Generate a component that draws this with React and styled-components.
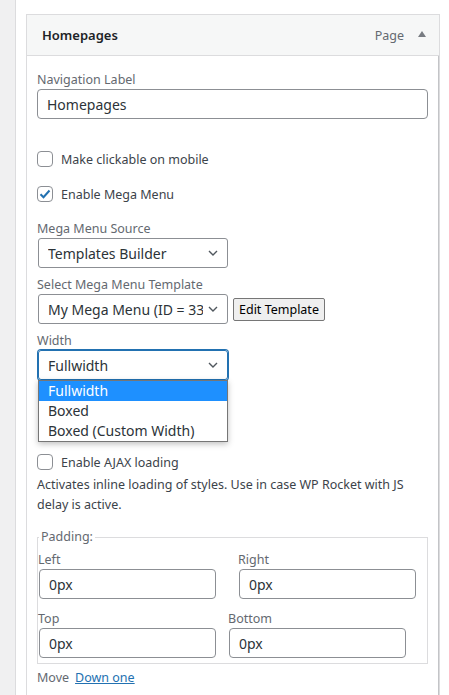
import React from "react";
import styled, { createGlobalStyle } from "styled-components";

const Global = createGlobalStyle`
  html, body { margin: 0; padding: 0; background: #fff; }
  body { font-family: "Noto Sans", "Open Sans", sans-serif; color: #3c434a; font-size: 13px; }
  * { box-sizing: border-box; }
`;

const Page = styled.div`
  display: flex;
  min-height: 695px;
`;

const Strip = styled.div`
  width: 16px;
  flex: none;
  background: #f0f0f1;
  border-right: 1px solid #dcdcde;
`;

const Main = styled.div`
  flex: 1;
  padding: 14px 9px 0 10px;
`;

const Card = styled.div`
  border: 1px solid #dcdcde;
  border-bottom: none;
`;

const Header = styled.div`
  height: 41px;
  background: #f6f7f7;
  border-bottom: 1px solid #dcdcde;
  display: flex;
  align-items: center;
  padding: 0 13px 0 15px;
`;

const Title = styled.div`
  flex: 1;
  font-weight: 600;
  font-size: 13px;
  color: #1d2327;
`;

const Type = styled.span`
  color: #646970;
  font-size: 12.5px;
  margin-right: 14px;
`;

const Toggle = styled.span`
  width: 0;
  height: 0;
  border-left: 4px solid transparent;
  border-right: 4px solid transparent;
  border-bottom: 6px solid #787c82;
  margin-bottom: 2px;
`;

const Body = styled.div`
  padding: 15px 10px 0 10px;
  border-right: 1px solid #c3c4c7;
  min-height: 640px;
`;

const Field = styled.div`
  position: relative;
  margin-top: ${(p) => p.$mt || 0}px;
`;

const Label = styled.div`
  line-height: 18px;
  font-size: 12.5px;
  color: #646970;
`;

const TextInput = styled.div`
  height: 30px;
  width: ${(p) => p.$w || "100%"};
  border: 1px solid #8c8f94;
  border-radius: 4px;
  padding: 0 9px;
  display: flex;
  align-items: center;
  font-size: 14px;
  color: #2c3338;
  margin-left: ${(p) => p.$ml || 0}px;
`;

const SelectRow = styled.div`
  display: flex;
  align-items: center;
  gap: 5px;
`;

const Select = styled.div`
  position: relative;
  width: 190px;
  flex: none;
  height: 30px;
  margin-left: 1px;
  border: 1px solid ${(p) => (p.$focus ? "#2271b1" : "#8c8f94")};
  box-shadow: ${(p) => (p.$focus ? "0 0 0 1px #2271b1" : "none")};
  border-radius: 3px;
  padding: 0 24px 0 9px;
  display: flex;
  align-items: center;
  font-size: 14px;
  color: #2c3338;
`;

const SelectText = styled.span`
  flex: 1;
  white-space: nowrap;
  overflow: hidden;
`;

const Chevron = styled.svg`
  position: absolute;
  right: 9px;
  top: 11px;
`;

const Button = styled.div`
  height: 23px;
  padding: 0 5px;
  border: 1px solid #767676;
  border-radius: 2px;
  background: #efefef;
  color: #000;
  font-size: 12.5px;
  display: flex;
  align-items: center;
`;

const Dropdown = styled.div`
  position: absolute;
  top: 48px;
  left: 1px;
  width: 190px;
  background: #fff;
  border: 1px solid #767676;
  box-shadow: 0 2px 6px rgba(0, 0, 0, 0.25);
  z-index: 2;
`;

const Option = styled.div`
  height: 20px;
  line-height: 20px;
  padding: 0 9px;
  font-size: 14px;
  background: ${(p) => (p.$active ? "#1e90ff" : "transparent")};
  color: ${(p) => (p.$active ? "#fff" : "#2c3338")};
`;

const CheckRow = styled.label`
  display: flex;
  align-items: center;
  gap: 8px;
  height: 20px;
  margin-top: ${(p) => p.$mt || 0}px;
  color: #3c434a;
  font-size: 12.5px;
`;

const Box = styled.span`
  width: 16px;
  height: 16px;
  border: 1px solid #8c8f94;
  border-radius: 4px;
  background: #fff;
  display: flex;
  align-items: center;
  justify-content: center;
`;

const Desc = styled.p`
  margin: 3px 0 0;
  line-height: 20px;
  font-size: 12.5px;
  color: #3c434a;
`;

const Fieldset = styled.fieldset`
  margin: 13px 0 0;
  padding: 0 1px 5px 0;
  border: 1px solid #dcdcde;
`;

const Legend = styled.legend`
  padding: 0 2px;
  margin-left: 1px;
  line-height: 18px;
  font-size: 12.5px;
  color: #646970;
`;

const PadRow = styled.div`
  display: flex;
  gap: ${(p) => p.$gap}px;
  margin-top: ${(p) => p.$mt || 0}px;
`;

const PadCell = styled.div`
  width: 177px;
`;

const Move = styled.div`
  margin-top: 4px;
  line-height: 20px;
  font-size: 12.5px;
  color: #646970;
  display: flex;
  gap: 6px;
`;

const Link = styled.a`
  color: #2271b1;
  text-decoration: underline;
`;

const ChevronIcon = () => (
  <Chevron width="10" height="6" viewBox="0 0 10 6">
    <path d="M1 1l4 4 4-4" fill="none" stroke="#50575e" strokeWidth="1.4" />
  </Chevron>
);

const Check = () => (
  <svg width="12" height="10" viewBox="0 0 12 10">
    <path d="M1.5 5.2l3 3L10.5 1.5" fill="none" stroke="#2271b1" strokeWidth="2" />
  </svg>
);

export default function App() {
  return (
    <>
      <Global />
      <Page>
        <Strip />
        <Main>
          <Card>
            <Header>
              <Title>Homepages</Title>
              <Type>Page</Type>
              <Toggle />
            </Header>
            <Body>
              <Field>
                <Label>Navigation Label</Label>
                <TextInput>Homepages</TextInput>
              </Field>
              <CheckRow $mt={30}>
                <Box />
                Make clickable on mobile
              </CheckRow>
              <CheckRow $mt={15}>
                <Box>
                  <Check />
                </Box>
                Enable Mega Menu
              </CheckRow>
              <Field $mt={16}>
                <Label>Mega Menu Source</Label>
                <Select>
                  <SelectText>Templates Builder</SelectText>
                  <ChevronIcon />
                </Select>
              </Field>
              <Field $mt={8}>
                <Label>Select Mega Menu Template</Label>
                <SelectRow>
                  <Select>
                    <SelectText>My Mega Menu (ID = 3365)</SelectText>
                    <ChevronIcon />
                  </Select>
                  <Button>Edit Template</Button>
                </SelectRow>
              </Field>
              <Field $mt={8}>
                <Label>Width</Label>
                <Select $focus>
                  <SelectText>Fullwidth</SelectText>
                  <ChevronIcon />
                </Select>
                <Dropdown>
                  <Option $active>Fullwidth</Option>
                  <Option>Boxed</Option>
                  <Option>Boxed (Custom Width)</Option>
                </Dropdown>
              </Field>
              <CheckRow $mt={72}>
                <Box />
                Enable AJAX loading
              </CheckRow>
              <Desc>
                Activates inline loading of styles. Use in case WP Rocket with JS
                delay is active.
              </Desc>
              <Fieldset>
                <Legend>Padding:</Legend>
                <PadRow $gap={23} $mt={5}>
                  <PadCell>
                    <Label>Left</Label>
                    <TextInput $ml={1}>0px</TextInput>
                  </PadCell>
                  <PadCell>
                    <Label>Right</Label>
                    <TextInput $ml={1}>0px</TextInput>
                  </PadCell>
                </PadRow>
                <PadRow $gap={13} $mt={11}>
                  <PadCell>
                    <Label>Top</Label>
                    <TextInput $ml={1}>0px</TextInput>
                  </PadCell>
                  <PadCell>
                    <Label>Bottom</Label>
                    <TextInput $ml={1}>0px</TextInput>
                  </PadCell>
                </PadRow>
              </Fieldset>
              <Move>
                Move <Link href="#">Down one</Link>
              </Move>
            </Body>
          </Card>
        </Main>
      </Page>
    </>
  );
}
